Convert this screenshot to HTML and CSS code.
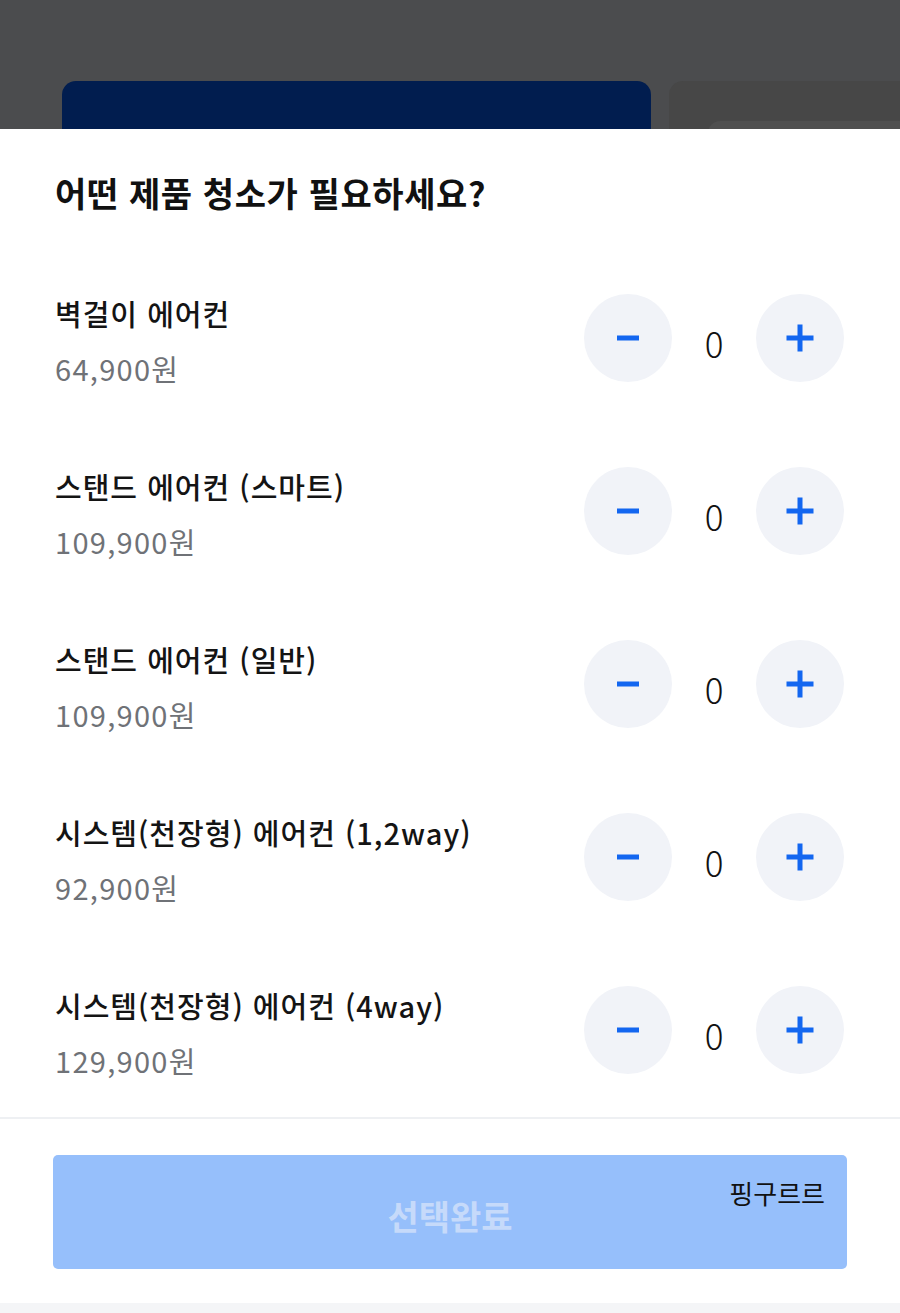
FILE: index.html
```html
<!DOCTYPE html>
<html lang="ko">
<head>
<meta charset="utf-8">
<link rel="stylesheet" href="styles.css">
</head>
<body>
<div class="backdrop">
  <div class="bg-card navy"></div>
  <div class="bg-card grey"><div class="bg-inner"></div></div>
</div>
<div class="sheet">
  <h1 class="title">어떤 제품 청소가 필요하세요?</h1>
  <ul class="list">
    <li class="row">
      <div class="info"><div class="name">벽걸이 에어컨</div><div class="price">64,900원</div></div>
      <div class="stepper">
        <button class="btn"><svg viewBox="0 0 28 28"><rect x="3" y="11.5" width="22" height="5" fill="#1366f0"/></svg></button>
        <span class="count">0</span>
        <button class="btn"><svg viewBox="0 0 28 28"><rect x="0.5" y="11.5" width="27" height="5" fill="#1366f0"/><rect x="11.5" y="0.5" width="5" height="27" fill="#1366f0"/></svg></button>
      </div>
    </li>
    <li class="row">
      <div class="info"><div class="name">스탠드 에어컨 (스마트)</div><div class="price">109,900원</div></div>
      <div class="stepper">
        <button class="btn"><svg viewBox="0 0 28 28"><rect x="3" y="11.5" width="22" height="5" fill="#1366f0"/></svg></button>
        <span class="count">0</span>
        <button class="btn"><svg viewBox="0 0 28 28"><rect x="0.5" y="11.5" width="27" height="5" fill="#1366f0"/><rect x="11.5" y="0.5" width="5" height="27" fill="#1366f0"/></svg></button>
      </div>
    </li>
    <li class="row">
      <div class="info"><div class="name">스탠드 에어컨 (일반)</div><div class="price">109,900원</div></div>
      <div class="stepper">
        <button class="btn"><svg viewBox="0 0 28 28"><rect x="3" y="11.5" width="22" height="5" fill="#1366f0"/></svg></button>
        <span class="count">0</span>
        <button class="btn"><svg viewBox="0 0 28 28"><rect x="0.5" y="11.5" width="27" height="5" fill="#1366f0"/><rect x="11.5" y="0.5" width="5" height="27" fill="#1366f0"/></svg></button>
      </div>
    </li>
    <li class="row">
      <div class="info"><div class="name">시스템(천장형) 에어컨 (1,2way)</div><div class="price">92,900원</div></div>
      <div class="stepper">
        <button class="btn"><svg viewBox="0 0 28 28"><rect x="3" y="11.5" width="22" height="5" fill="#1366f0"/></svg></button>
        <span class="count">0</span>
        <button class="btn"><svg viewBox="0 0 28 28"><rect x="0.5" y="11.5" width="27" height="5" fill="#1366f0"/><rect x="11.5" y="0.5" width="5" height="27" fill="#1366f0"/></svg></button>
      </div>
    </li>
    <li class="row">
      <div class="info"><div class="name">시스템(천장형) 에어컨 (4way)</div><div class="price">129,900원</div></div>
      <div class="stepper">
        <button class="btn"><svg viewBox="0 0 28 28"><rect x="3" y="11.5" width="22" height="5" fill="#1366f0"/></svg></button>
        <span class="count">0</span>
        <button class="btn"><svg viewBox="0 0 28 28"><rect x="0.5" y="11.5" width="27" height="5" fill="#1366f0"/><rect x="11.5" y="0.5" width="5" height="27" fill="#1366f0"/></svg></button>
      </div>
    </li>
  </ul>
  <div class="footer">
    <button class="submit">선택완료<span class="tag">핑구르르</span></button>
  </div>
</div>
<div class="bottom-bar"></div>
</body>
</html>
```

FILE: styles.css
```css
* { box-sizing: border-box; }
html, body { margin: 0; padding: 0; }
body {
  width: 900px;
  height: 1313px;
  overflow: hidden;
  background: #f4f5f7;
  font-family: "Noto Sans CJK KR", "Noto Sans", sans-serif;
  color: #111;
}
.backdrop {
  height: 129px;
  background: #4b4c4e;
  display: flex;
  gap: 18px;
  padding: 81px 0 0 62px;
  overflow: hidden;
}
.bg-card {
  height: 80px;
  border-radius: 14px 14px 0 0;
  flex-shrink: 0;
}
.navy { width: 589px; background: #011d4f; }
.grey { width: 260px; background: #474747; padding: 40px 0 0 39px; }
.bg-inner { height: 40px; background: #4f4f4f; border-radius: 12px 0 0 0; }

.sheet {
  background: #fff;
  height: 1174px;
}
.title {
  margin: 0;
  padding: 40px 0 0 55px;
  height: 122.5px;
  font-size: 34px;
  font-weight: 700;
  line-height: 48px;
  letter-spacing: 0.6px;
}
.list {
  list-style: none;
  margin: 0;
  padding: 0;
  border-bottom: 2px solid #eef0f3;
}
.row {
  height: 173px;
  display: flex;
  align-items: center;
  justify-content: space-between;
  padding: 0 56px 0 55px;
}
.info { display: flex; flex-direction: column; margin-top: 4px; }
.name {
  font-size: 29px;
  font-weight: 500;
  line-height: 40px;
  letter-spacing: 1px;
  color: #141414;
}
.price {
  font-size: 29px;
  line-height: 40px;
  letter-spacing: 1.3px;
  margin-top: 15px;
  color: #6f7277;
}
.stepper {
  display: flex;
  align-items: center;
}
.btn {
  width: 88px;
  height: 88px;
  border-radius: 50%;
  border: 0;
  padding: 0;
  background: #f1f3f8;
  display: flex;
  align-items: center;
  justify-content: center;
}
.btn svg { width: 28px; height: 28px; }
.count {
  width: 84px;
  text-align: center;
  font-size: 35px;
  line-height: 44px;
  margin-top: 9px;
  color: #111;
  font-family: "Noto Sans CJK KR", "Noto Sans", sans-serif;
  font-weight: 300;
}
.footer {
  padding: 36px 53px 34px;
}
.submit {
  position: relative;
  width: 794px;
  height: 114px;
  border: 0;
  border-radius: 5px;
  background: #96bffb;
  color: #c6dafa;
  font-family: "Noto Sans CJK KR", "Noto Sans", sans-serif;
  font-size: 34px;
  font-weight: 700;
  padding: 8px 0 0;
}
.tag {
  position: absolute;
  right: 22px;
  top: 19px;
  font-size: 26px;
  font-weight: 400;
  color: #111;
}
.bottom-bar { height: 10px; background: #f4f5f7; }
```
